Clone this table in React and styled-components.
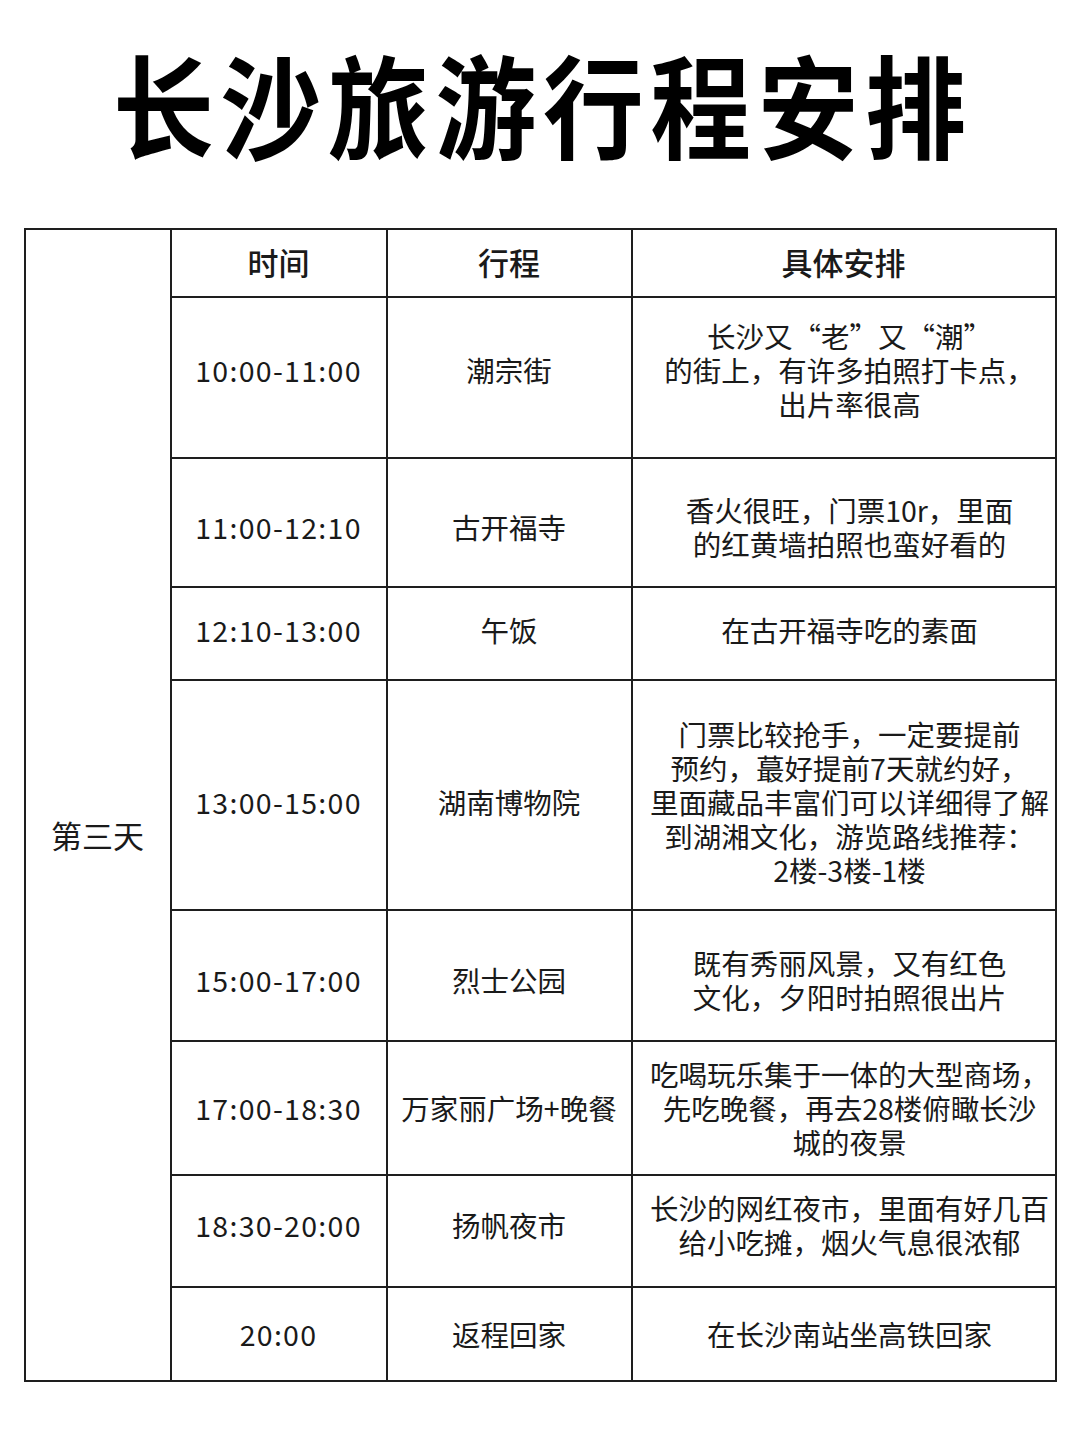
import React from 'react';
import styled, { createGlobalStyle } from 'styled-components';

const GlobalStyle = createGlobalStyle`
  html, body {
    margin: 0;
    padding: 0;
    background: #ffffff;
  }
  body {
    font-family: "Noto Sans CJK SC", "Noto Sans", sans-serif;
    color: #1a1a1a;
  }
`;

const Page = styled.div`
  width: 1080px;
  height: 1440px;
  background: #ffffff;
  display: flex;
  flex-direction: column;
  align-items: center;
`;

const TitleBox = styled.div`
  height: 228px;
  display: flex;
  align-items: flex-start;
  justify-content: center;
`;

const Title = styled.h1`
  margin: 32px 0 0 0;
  font-size: 104px;
  font-weight: 700;
  line-height: 140px;
  color: #000;
  letter-spacing: 6.8px;
  text-indent: 6.8px;
  text-align: center;
  white-space: nowrap;
  transform: scale(0.97, 1.08);
`;

const Table = styled.table`
  width: 1031px;
  border-collapse: collapse;
  table-layout: fixed;
  border: 2px solid #1e1e1e;
`;

const Cell = styled.td`
  border: 2px solid #1e1e1e;
  padding: ${p => (p.$shift > 0 ? p.$shift * 2 : 0)}px 4px ${p => (p.$shift < 0 ? -p.$shift * 2 : 0)}px;
  text-align: center;
  vertical-align: middle;
  font-size: 28.5px;
  line-height: 34px;
  color: #1a1a1a;
  letter-spacing: ${p => (p.$digits ? '1.3px' : '0')};
  white-space: nowrap;
`;

const DescCell = styled(Cell)`
  padding-left: 12px;
  padding-right: 0;
`;

const DayCell = styled(Cell)`
  font-size: 31px;
`;

const HeadCell = styled(Cell)`
  font-weight: 500;
  font-size: 31px;
`;

const Row = styled.tr`
  height: ${p => p.$h}px;
`;

const rows = [
  { h: 161, s: -8, time: '10:00-11:00', place: '潮宗街', desc: ['长沙又“老”又“潮”', '的街上，有许多拍照打卡点，', '出片率很高'] },
  { h: 129, s: 4, time: '11:00-12:10', place: '古开福寺', desc: ['香火很旺，门票10r，里面', '的红黄墙拍照也蛮好看的'] },
  { h: 93, s: -4, time: '12:10-13:00', place: '午饭', desc: ['在古开福寺吃的素面'] },
  { h: 230, s: 7, time: '13:00-15:00', place: '湖南博物院', desc: ['门票比较抢手，一定要提前', '预约，蕞好提前7天就约好，', '里面藏品丰富们可以详细得了解', '到湖湘文化，游览路线推荐：', '2楼-3楼-1楼'] },
  { h: 131, s: 4, time: '15:00-17:00', place: '烈士公园', desc: ['既有秀丽风景，又有红色', '文化，夕阳时拍照很出片'] },
  { h: 134, s: 0, time: '17:00-18:30', place: '万家丽广场+晚餐', desc: ['吃喝玩乐集于一体的大型商场，', '先吃晚餐，再去28楼俯瞰长沙', '城的夜景'] },
  { h: 112, s: -6, time: '18:30-20:00', place: '扬帆夜市', desc: ['长沙的网红夜市，里面有好几百', '给小吃摊，烟火气息很浓郁'] },
  { h: 94, s: 0, time: '20:00', place: '返程回家', desc: ['在长沙南站坐高铁回家'] },
];

const App = () => (
  <Page>
    <GlobalStyle />
    <TitleBox>
      <Title>长沙旅游行程安排</Title>
    </TitleBox>
    <Table>
      <colgroup>
        <col style={{ width: 146 }} />
        <col style={{ width: 216 }} />
        <col style={{ width: 245 }} />
        <col style={{ width: 424 }} />
      </colgroup>
      <tbody>
        <Row $h={68}>
          <DayCell rowSpan={rows.length + 1} $shift={30}>第三天</DayCell>
          <HeadCell $shift={-1}>时间</HeadCell>
          <HeadCell $shift={-1}>行程</HeadCell>
          <HeadCell $shift={-1}>具体安排</HeadCell>
        </Row>
        {rows.map(r => (
          <Row key={r.time} $h={r.h}>
            <Cell $digits $shift={r.s}>{r.time}</Cell>
            <Cell $shift={r.s}>{r.place}</Cell>
            <DescCell $shift={r.s}>
              {r.desc.map((line, i) => (
                <React.Fragment key={i}>
                  {i > 0 && <br />}
                  {line}
                </React.Fragment>
              ))}
            </DescCell>
          </Row>
        ))}
      </tbody>
    </Table>
  </Page>
);

export default App;
